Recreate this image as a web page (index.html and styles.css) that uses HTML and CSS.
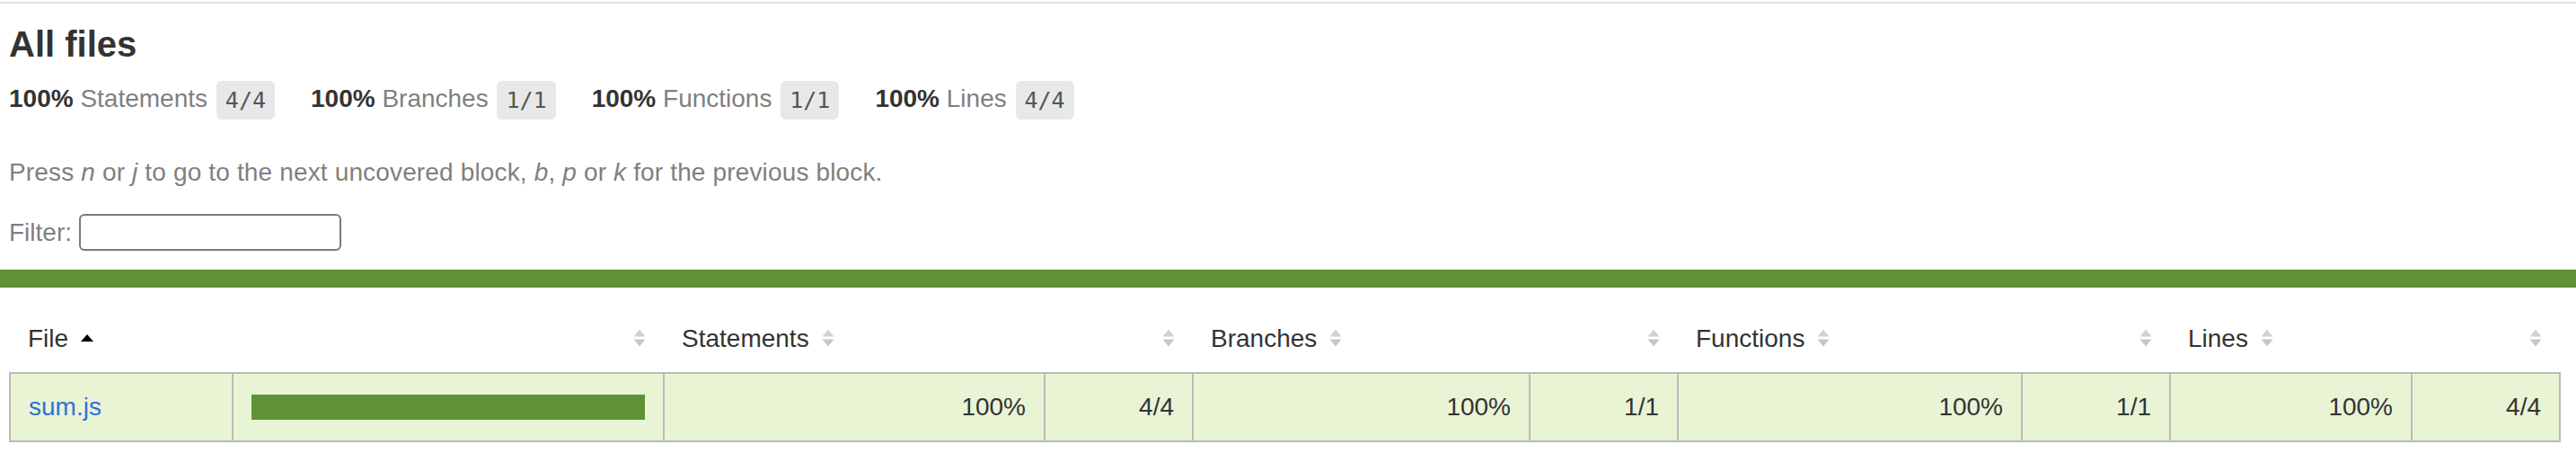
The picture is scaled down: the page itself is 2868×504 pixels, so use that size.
FILE: index.html
```html
<!DOCTYPE html>
<html lang="en">
<head>
<meta charset="utf-8">
<title>Code coverage report for All files</title>
<link rel="stylesheet" href="styles.css">
</head>
<body>
<div class="topline"></div>
<div class="summary">
  <h1>All files</h1>
  <div class="stats">
    <div class="stat"><span class="strong">100%</span> <span class="quiet">Statements</span> <span class="fraction">4/4</span></div>
    <div class="stat"><span class="strong">100%</span> <span class="quiet">Branches</span> <span class="fraction">1/1</span></div>
    <div class="stat"><span class="strong">100%</span> <span class="quiet">Functions</span> <span class="fraction">1/1</span></div>
    <div class="stat"><span class="strong">100%</span> <span class="quiet">Lines</span> <span class="fraction">4/4</span></div>
  </div>
  <p class="quiet hint">Press <em>n</em> or <em>j</em> to go to the next uncovered block, <em>b</em>, <em>p</em> or <em>k</em> for the previous block.</p>
  <div class="quiet filter"><label for="fileSearch">Filter:</label><input type="search" id="fileSearch" class="search"></div>
</div>
<div class="status-line high"></div>
<div class="table-wrap">
  <table class="coverage-summary">
    <colgroup>
      <col class="c-file"><col class="c-pic">
      <col class="c-st"><col class="c-abs">
      <col class="c-br"><col class="c-abs">
      <col class="c-fn"><col class="c-abs">
      <col class="c-ln"><col class="c-abs">
    </colgroup>
    <thead>
      <tr>
        <th class="file sorted">File<svg class="sorter" width="14" height="20" viewBox="0 0 14 20"><path d="M7 6 L14 14 H0 Z" fill="#000"/></svg></th>
        <th class="pic"><svg class="sorter" width="14" height="20" viewBox="0 0 14 20"><path d="M7 0.5 L13.5 8.5 H0.5 Z" fill="#d2d2d2"/><path d="M0.5 11.5 H13.5 L7 19.5 Z" fill="#c6c6c6"/></svg></th>
        <th class="pct">Statements<svg class="sorter" width="14" height="20" viewBox="0 0 14 20"><path d="M7 0.5 L13.5 8.5 H0.5 Z" fill="#d2d2d2"/><path d="M0.5 11.5 H13.5 L7 19.5 Z" fill="#c6c6c6"/></svg></th>
        <th class="abs"><svg class="sorter" width="14" height="20" viewBox="0 0 14 20"><path d="M7 0.5 L13.5 8.5 H0.5 Z" fill="#d2d2d2"/><path d="M0.5 11.5 H13.5 L7 19.5 Z" fill="#c6c6c6"/></svg></th>
        <th class="pct">Branches<svg class="sorter" width="14" height="20" viewBox="0 0 14 20"><path d="M7 0.5 L13.5 8.5 H0.5 Z" fill="#d2d2d2"/><path d="M0.5 11.5 H13.5 L7 19.5 Z" fill="#c6c6c6"/></svg></th>
        <th class="abs"><svg class="sorter" width="14" height="20" viewBox="0 0 14 20"><path d="M7 0.5 L13.5 8.5 H0.5 Z" fill="#d2d2d2"/><path d="M0.5 11.5 H13.5 L7 19.5 Z" fill="#c6c6c6"/></svg></th>
        <th class="pct">Functions<svg class="sorter" width="14" height="20" viewBox="0 0 14 20"><path d="M7 0.5 L13.5 8.5 H0.5 Z" fill="#d2d2d2"/><path d="M0.5 11.5 H13.5 L7 19.5 Z" fill="#c6c6c6"/></svg></th>
        <th class="abs"><svg class="sorter" width="14" height="20" viewBox="0 0 14 20"><path d="M7 0.5 L13.5 8.5 H0.5 Z" fill="#d2d2d2"/><path d="M0.5 11.5 H13.5 L7 19.5 Z" fill="#c6c6c6"/></svg></th>
        <th class="pct">Lines<svg class="sorter" width="14" height="20" viewBox="0 0 14 20"><path d="M7 0.5 L13.5 8.5 H0.5 Z" fill="#d2d2d2"/><path d="M0.5 11.5 H13.5 L7 19.5 Z" fill="#c6c6c6"/></svg></th>
        <th class="abs"><svg class="sorter" width="14" height="20" viewBox="0 0 14 20"><path d="M7 0.5 L13.5 8.5 H0.5 Z" fill="#d2d2d2"/><path d="M0.5 11.5 H13.5 L7 19.5 Z" fill="#c6c6c6"/></svg></th>
      </tr>
    </thead>
    <tbody>
      <tr>
        <td class="file high"><a href="#">sum.js</a></td>
        <td class="pic high"><div class="chart"><div class="cover-fill" style="width: 100%"></div></div></td>
        <td class="pct high">100%</td>
        <td class="abs high">4/4</td>
        <td class="pct high">100%</td>
        <td class="abs high">1/1</td>
        <td class="pct high">100%</td>
        <td class="abs high">1/1</td>
        <td class="pct high">100%</td>
        <td class="abs high">4/4</td>
      </tr>
    </tbody>
  </table>
</div>
</body>
</html>
```

FILE: styles.css
```css
*, *::before, *::after {
  box-sizing: border-box;
}

body {
  margin: 0;
  font-family: "Liberation Sans", Arial, Helvetica, sans-serif;
  font-size: 28px;
  color: #333;
  background: #fff;
}

.topline {
  height: 2px;
  margin-top: 2px;
  background: #e2e2e2;
}

.summary {
  padding: 23px 19px 21px 10px;
}

h1 {
  margin: 0;
  font-size: 40px;
  line-height: 44px;
  font-weight: bold;
}

.stats {
  display: flex;
}

.stat {
  padding: 19px 40px 20px 0;
  white-space: nowrap;
}

.strong {
  font-weight: bold;
}

.quiet {
  color: #7f7f7f;
}

.fraction {
  display: inline-block;
  margin-left: 2px;
  padding: 8px 10px;
  font-family: "DejaVu Sans Mono", "Liberation Mono", monospace;
  font-size: 25px;
  line-height: 27px;
  color: #555;
  background: #e8e8e8;
  border-radius: 6px;
  vertical-align: middle;
}

.hint {
  margin: 23px 0 0;
  letter-spacing: 0.15px;
}

.filter {
  display: flex;
  align-items: center;
  gap: 8px;
  margin-top: 30px;
}

.search {
  -webkit-appearance: none;
  appearance: none;
  width: 292px;
  height: 41px;
  margin: 0;
  border: 2px solid #7a7a7a;
  border-radius: 6px;
  background: #fff;
}

.status-line {
  height: 20px;
}

.status-line.high {
  background: #5f9135;
}

.table-wrap {
  padding: 20px 19px 20px 10px;
}

.coverage-summary {
  width: 100%;
  table-layout: fixed;
  border-collapse: collapse;
}

.c-file { width: 248px; }
.c-pic { width: 480px; }
.c-st { width: 424px; }
.c-br { width: 375px; }
.c-fn { width: 383px; }
.c-ln { width: 269px; }
.c-abs { width: 165px; }

.coverage-summary tr {
  border-bottom: 2px solid #bbb;
}

.coverage-summary tbody {
  border: 2px solid #bbb;
}

.coverage-summary th,
.coverage-summary td {
  padding: 20px;
  line-height: 34px;
  vertical-align: top;
  white-space: nowrap;
}

.coverage-summary th {
  text-align: left;
  font-weight: normal;
  color: #333;
}

.coverage-summary td {
  border-right: 2px solid #bbb;
}

.coverage-summary td:last-child {
  border-right: none;
}

.coverage-summary th.pic,
.coverage-summary th.abs,
.coverage-summary td.pct,
.coverage-summary td.abs {
  text-align: right;
}

.sorter {
  display: inline-block;
  margin-left: 14px;
  vertical-align: baseline;
}

.high {
  background: #e9f4d5;
}

.coverage-summary a {
  color: #2f72d5;
  text-decoration: none;
}

.chart {
  margin-top: 3px;
  line-height: 0;
}

.cover-fill {
  height: 28px;
  background: #5f9135;
}
```
